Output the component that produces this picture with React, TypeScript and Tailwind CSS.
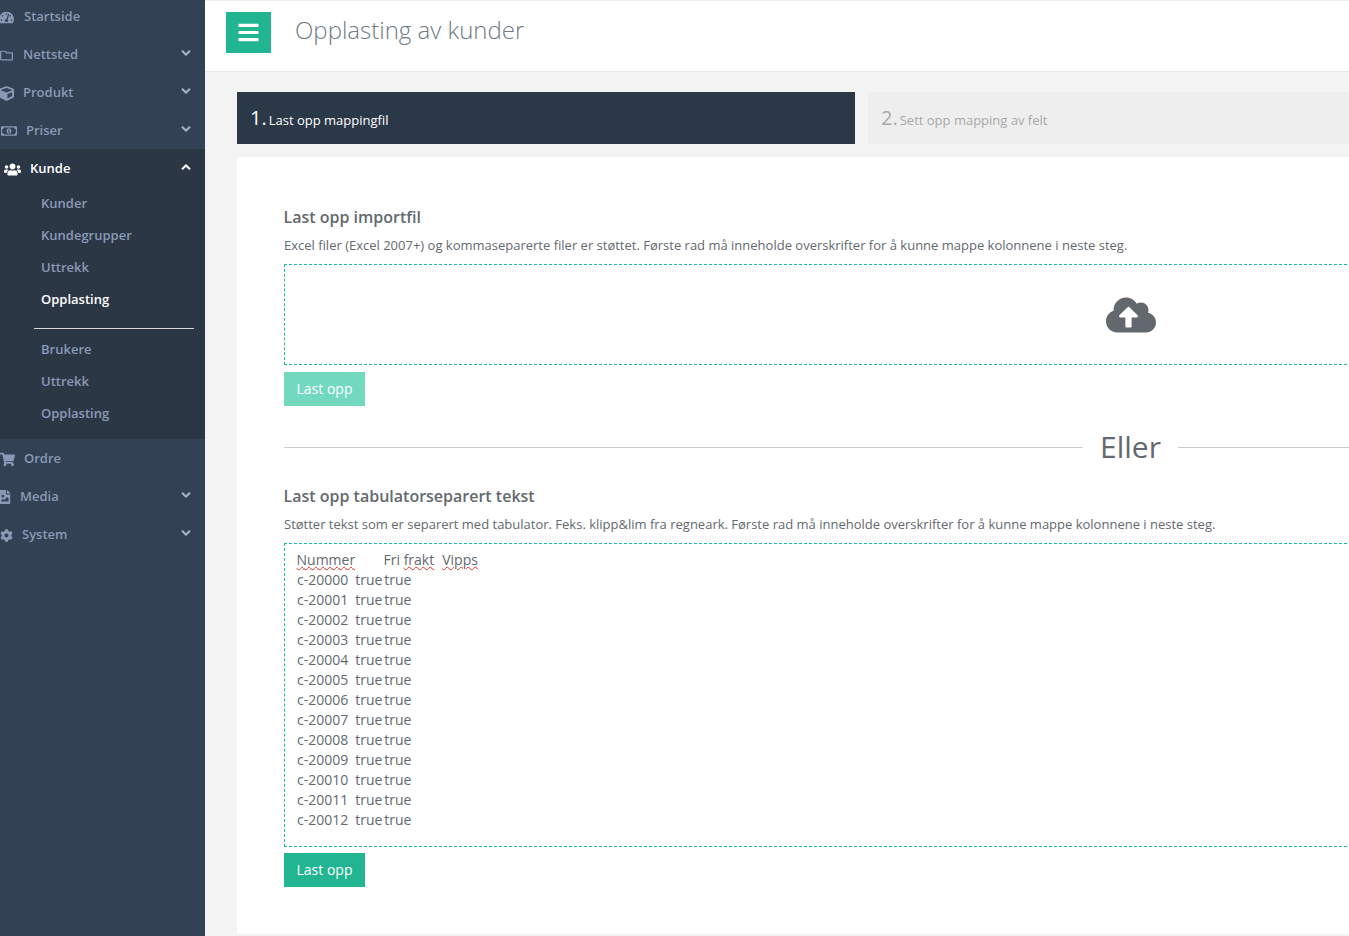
import React from "react";
import {
  FaBars,
  FaChevronDown,
  FaChevronUp,
  FaCloudUploadAlt,
  FaCog,
  FaCube,
  FaFileImage,
  FaRegFolder,
  FaRegMoneyBillAlt,
  FaShoppingCart,
  FaTachometerAlt,
  FaUsers,
} from "react-icons/fa";

function NavItem({
  icon,
  label,
  chevron = false,
}: {
  icon: React.ReactNode;
  label: string;
  chevron?: boolean;
}) {
  return (
    <div className="flex h-[38px] items-center pt-[2px] text-[13px] font-semibold text-[#8a99b5]">
      {icon}
      <span className="flex-1">{label}</span>
      {chevron && <FaChevronDown className="mr-[14px] -mt-[4px] text-[10px] text-[#a9b5c9] [stroke-width:30]" />}
    </div>
  );
}

function SubItem({ label, active = false }: { label: string; active?: boolean }) {
  return (
    <div className={`flex h-8 items-center pt-[2px] pl-[41px] text-[13px] font-semibold ${active ? "text-white" : "text-[#8a99b5]"}`}>
      {label}
    </div>
  );
}

function Sidebar() {
  return (
    <aside className="h-full w-[205px] shrink-0 overflow-hidden bg-[#324153]">
      <nav className="-mt-[3px]">
        <NavItem label="Startside" icon={<FaTachometerAlt className="mr-[10px] -ml-px text-[15px]" />} />
        <NavItem label="Nettsted" chevron icon={<FaRegFolder className="mr-[10px] text-[13px]" />} />
        <NavItem label="Produkt" chevron icon={<FaCube className="mr-[9px] -ml-px text-[15px]" />} />
        <NavItem label="Priser" chevron icon={<FaRegMoneyBillAlt className="mr-[9px] ml-px text-[16px]" />} />
        <div className="h-[290px] bg-[#2c3745]">
          <div className="flex h-[38px] items-center pt-[2px] pl-1 text-[13px] font-semibold text-white">
            <FaUsers className="mr-[9px] text-[17px]" />
            <span className="flex-1">Kunde</span>
            <FaChevronUp className="mr-[14px] -mt-[4px] text-[10px] [stroke-width:30]" />
          </div>
          <SubItem label="Kunder" />
          <SubItem label="Kundegrupper" />
          <SubItem label="Uttrekk" />
          <SubItem label="Opplasting" active />
          <div className="mt-[13px] mr-[11px] mb-[4px] ml-[34px] border-t border-[#d8d8d8]" />
          <SubItem label="Brukere" />
          <SubItem label="Uttrekk" />
          <SubItem label="Opplasting" />
        </div>
        <NavItem label="Ordre" icon={<FaShoppingCart className="mr-[9px] text-[15px]" />} />
        <NavItem label="Media" chevron icon={<FaFileImage className="mr-[8px] -ml-[2px] text-[14px]" />} />
        <NavItem label="System" chevron icon={<FaCog className="mr-[9px] text-[13px]" />} />
      </nav>
    </aside>
  );
}

function UploadButton({ disabled = false }: { disabled?: boolean }) {
  return (
    <button className={`h-[34px] w-[81px] text-center text-sm text-white ${disabled ? "bg-[#72d9bf]" : "bg-[#22b592]"}`}>
      Last opp
    </button>
  );
}

function Misspelled({ children }: { children: React.ReactNode }) {
  return <span className="underline decoration-[#e0302a] decoration-wavy decoration-1">{children}</span>;
}

const rows = ["00", "01", "02", "03", "04", "05", "06", "07", "08", "09", "10", "11", "12"];

export default function App() {
  return (
    <div className="flex h-[936px] w-[1349px] overflow-hidden bg-[#f3f3f3] font-['Open_Sans',sans-serif] text-[#63696f]">
      <Sidebar />
      <div className="min-w-0 flex-1 overflow-hidden">
        <header className="flex h-[72px] items-start border-t border-b border-t-[#efefef] border-b-[#e6e6e6] bg-white pt-[11px] pl-[21px]">
          <button className="flex h-[41px] w-[45px] items-center justify-center bg-[#22b592] text-white">
            <FaBars className="text-[23px]" />
          </button>
          <h1 className="mt-[2px] ml-6 text-2xl font-light text-[#6f7a86]">Opplasting av kunder</h1>
        </header>

        <div className="w-[1819px] pt-5 pl-8">
          <div className="flex gap-[13px]">
            <div className="flex h-[52px] w-[618px] items-center bg-[#2b3848] pl-[13px] text-white">
              <span className="-mt-[1px] text-xl">1.</span>
              <span className="mt-[6px] ml-[2px] text-[13px]">Last opp mappingfil</span>
            </div>
            <div className="flex h-[52px] w-[618px] items-center bg-[#eeeeee] pl-[13px] text-[#a9a9a9]">
              <span className="-mt-[1px] text-xl">2.</span>
              <span className="mt-[6px] ml-[2px] text-[13px]">Sett opp mapping av felt</span>
            </div>
          </div>

          <main className="mt-[13px] h-[777px] bg-white px-[47px] pt-[48px]">
            <h2 className="-ml-[0.5px] text-base leading-6 font-semibold">Last opp importfil</h2>
            <p className="mt-[7px] text-[13px] leading-[18px]">
              Excel filer (Excel 2007+) og kommaseparerte filer er støttet. Første rad må inneholde overskrifter for å kunne mappe kolonnene i neste steg.
            </p>
            <div className="mt-[10px] flex h-[101px] items-center justify-center border border-dashed border-[#1abc9c]">
              <FaCloudUploadAlt className="text-[50px] text-[#63686e]" />
            </div>
            <div className="mt-[7px] flex">
              <UploadButton disabled />
            </div>

            <div className="mt-[21px] flex h-10 items-center">
              <div className="flex-1 border-t border-[#cccccc]" />
              <span className="mx-[17px] text-[30px] leading-10">Eller</span>
              <div className="flex-1 border-t border-[#cccccc]" />
            </div>

            <h2 className="mt-[17px] -ml-[0.5px] text-base leading-6 font-semibold">Last opp tabulatorseparert tekst</h2>
            <p className="mt-[7px] text-[13px] leading-[18px]">
              Støtter tekst som er separert med tabulator. Feks. klipp&amp;lim fra regneark. Første rad må inneholde overskrifter for å kunne mappe kolonnene i neste steg.
            </p>
            <div className="mt-[10px] h-[304px] border border-dashed border-[#1abc9c] px-3 pt-[6px] text-sm leading-5 whitespace-pre">
              <div className="-ml-[0.5px]">
                <span className="inline-block w-[87px]">
                  <Misspelled>Nummer</Misspelled>
                </span>
                Fri <Misspelled>frakt</Misspelled>
                <span className="inline-block w-2" />
                <Misspelled>Vipps</Misspelled>
              </div>
              {rows.map((n) => (
                <div key={n}>{`c-200${n}\ttrue\ttrue`}</div>
              ))}
            </div>
            <div className="mt-[6px] flex">
              <UploadButton />
            </div>
          </main>
        </div>
      </div>
    </div>
  );
}
